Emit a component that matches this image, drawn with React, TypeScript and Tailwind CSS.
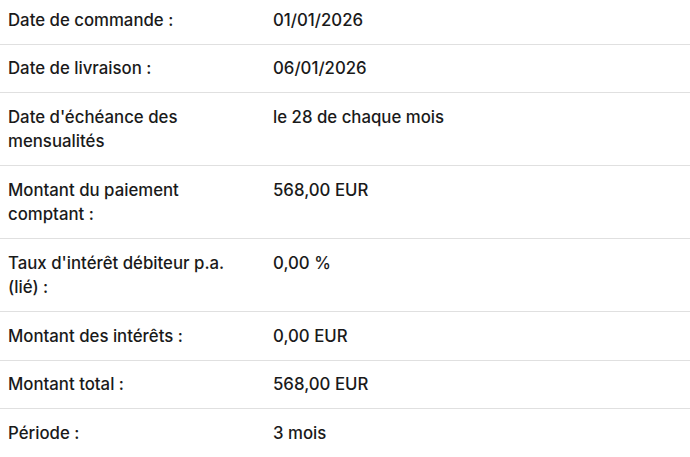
const rows: [string, string][] = [
  ["Date de commande\u00a0:", "01/01/2026"],
  ["Date de livraison\u00a0:", "06/01/2026"],
  ["Date d'échéance des mensualités", "le 28 de chaque mois"],
  ["Montant du paiement comptant\u00a0:", "568,00 EUR"],
  ["Taux d'intérêt débiteur p.a. (lié)\u00a0:", "0,00 %"],
  ["Montant des intérêts\u00a0:", "0,00 EUR"],
  ["Montant total\u00a0:", "568,00 EUR"],
  ["Période\u00a0:", "3 mois"],
];

export default function App() {
  return (
    <div
      className="w-[690px] bg-white text-[#1a1a1a] text-[16.8px] font-medium leading-[24.5px]"
      style={{ fontFamily: "Inter, 'Liberation Sans', sans-serif" }}
    >
      {rows.map(([label, value], i) => (
        <div
          key={label}
          className={`flex border-b border-[#e0e0e0] ${i === 0 ? "pt-[7.5px] pb-[11.5px]" : "py-[11.5px]"}`}
        >
          <div className="w-[265px] shrink-0 pl-2 pr-4">{label}</div>
          <div className="flex-1 pl-2">{value}</div>
        </div>
      ))}
    </div>
  );
}
